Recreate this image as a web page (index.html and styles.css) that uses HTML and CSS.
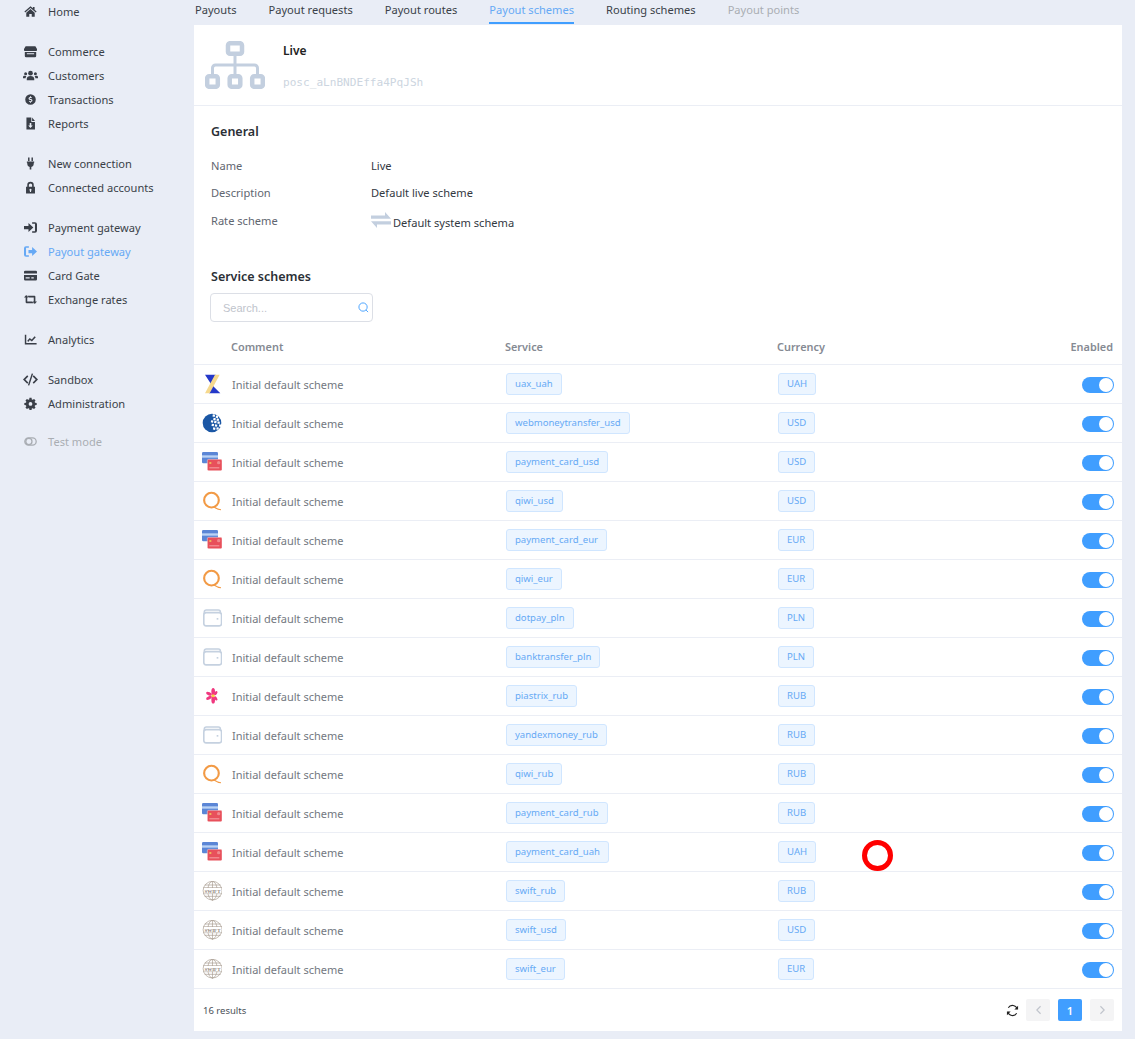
FILE: index.html
```html
<!DOCTYPE html>
<html lang="en">
<head>
    <meta name="viewport" content="width=device-width, initial-scale=1.0">
    <title>Payout schemes</title>
    <link rel="stylesheet" href="styles.css">
</head>
<body>
    <svg class="sprite" xmlns="http://www.w3.org/2000/svg">
        <symbol id="i-card" viewBox="0 0 30 30">
            <rect x="0" y="0" width="24" height="17" rx="2" fill="#5b86d6"/>
            <rect x="0" y="5" width="24" height="3.500" fill="#b9d3f5"/>
            <rect x="8" y="11" width="22" height="17" rx="2" fill="#e8505b" stroke="#fff" stroke-width=".6"/>
            <rect x="11" y="15" width="3" height="3" fill="#eeb45a"/>
            <rect x="11" y="23" width="15" height="1.500" fill="#f5a3a8"/>
            <circle cx="25" cy="16" r="2.500" fill="#f08a8f"/>
        </symbol>
        <symbol id="i-qiwi" viewBox="0 0 30 30">
            <circle cx="14.200" cy="13.700" r="11" fill="none" stroke="#f29a45" stroke-width="3.200"/>
            <path d="M18 24c3 2 6 4 10.500 4" fill="none" stroke="#f29a45" stroke-width="1.600"/>
        </symbol>
        <symbol id="i-wallet" viewBox="0 0 30 30">
            <path d="M3.500 9V6a3 3 0 0 1 3-3h18a3 3 0 0 1 3 3v3" fill="none" stroke="#c5d1e0" stroke-width="2.400"/>
            <rect x="2.700" y="7" width="26.600" height="19.800" rx="3.500" fill="#fff" stroke="#c5d1e0" stroke-width="2.400"/>
            <rect x="22" y="15" width="2.500" height="2.500" fill="#c5d1e0"/>
        </symbol>
        <symbol id="i-swift" viewBox="0 0 30 30">
            <g fill="none" stroke="#a79c90" stroke-width="1">
                <circle cx="15.700" cy="14.500" r="14"/>
                <ellipse cx="15.700" cy="14.500" rx="7" ry="14"/>
                <path d="M15.700 .5v29M4 6h24M2 10h28M2 19h28M4 23h24"/>
            </g>
            <rect x="3" y="10.500" width="26" height="8" fill="#fff"/>
            <text x="15.700" y="17.500" text-anchor="middle" class="swift-text">SWIFT</text>
        </symbol>
        <symbol id="i-uax" viewBox="0 0 30 30">
            <g transform="translate(1.500 0)">
                <path d="M3 1H19L12 15zM12 15 26 29H9z" fill="#2438c9"/>
                <path d="M18 1H25L10 29H3z" fill="#f6d98e"/>
            </g>
        </symbol>
        <symbol id="i-wm" viewBox="0 0 30 30">
            <circle cx="15" cy="15" r="14" fill="#1b57a5"/>
            <g fill="#fff" transform="rotate(10 15 15)">
                <rect x="14" y="2" width="3.400" height="3.400"/><rect x="19" y="3" width="3.400" height="3.400"/>
                <rect x="16" y="7" width="3.400" height="3.400"/><rect x="21" y="7" width="3.400" height="3.400"/>
                <rect x="13" y="11" width="3.400" height="3.400"/><rect x="18" y="11" width="3.400" height="3.400"/><rect x="23" y="11" width="3.400" height="3.400"/>
                <rect x="15" y="16" width="3.400" height="3.400"/><rect x="20" y="16" width="3.400" height="3.400"/><rect x="26" y="15" width="3.400" height="3.400"/>
                <rect x="18" y="21" width="3.400" height="3.400"/><rect x="23" y="20" width="3.400" height="3.400"/>
            </g>
        </symbol>
        <symbol id="i-flower" viewBox="0 0 30 30">
            <g transform="translate(3.500 3) scale(.78)">
                <g fill="#f0387f">
                    <ellipse cx="17" cy="7" rx="3.500" ry="7"/>
                    <ellipse cx="17" cy="23" rx="3.500" ry="7"/>
                    <ellipse cx="9" cy="11" rx="6" ry="3" transform="rotate(25 9 11)"/>
                    <ellipse cx="9" cy="19" rx="6" ry="3" transform="rotate(-25 9 19)"/>
                    <ellipse cx="22" cy="10" rx="2.500" ry="4.500" transform="rotate(35 22 10)"/>
                    <ellipse cx="22" cy="20" rx="2.500" ry="4.500" transform="rotate(-35 22 20)"/>
                </g>
                <circle cx="17" cy="15" r="3" fill="#f6d33c"/>
            </g>
        </symbol>
    </svg>

    <div class="layout">
        <nav class="sidebar">
            <ul class="nav-group">
                <li class="nav-item"><svg class="nav-icon" viewBox="0 0 16 16"><path d="M8 1.500 0.500 8l1 1.100L8 3.600l6.500 5.500 1-1.100L13 5.800V2.500h-2v1.600zM8 5 2.800 9.400V14.500h3.700V11h3v3.500h3.700V9.400z"/></svg>Home</li>
            </ul>
            <ul class="nav-group">
                <li class="nav-item"><svg class="nav-icon" viewBox="0 0 16 16"><path d="M2 1.500h12l2 3.500v1.500a1 1 0 0 1-1 1H1a1 1 0 0 1-1-1V5zM1 8.500h14v5a1.500 1.500 0 0 1-1.500 1.500h-11A1.500 1.500 0 0 1 1 13.500zM3.500 10v1.500h9V10z" fill-rule="evenodd"/></svg>Commerce</li>
                <li class="nav-item"><svg class="nav-icon nav-icon-wide" viewBox="0 0 16 16"><circle cx="8" cy="5.500" r="2.500"/><circle cx="2.800" cy="6" r="1.600"/><circle cx="13.200" cy="6" r="1.600"/><path d="M4 13v-1.500C4 9.800 5.500 8.500 8 8.500s4 1.300 4 3V13zM0 11V9.500C0 8.600.8 8.200 2 8.200c.6 0 1.200.2 1.600.5C3 9.400 2.800 10.200 2.800 11zM16 11V9.500c0-.9-.8-1.300-2-1.300-.6 0-1.200.2-1.600.5.600.7.800 1.500.800 2.300z"/></svg>Customers</li>
                <li class="nav-item"><svg class="nav-icon" viewBox="0 0 16 16"><path fill-rule="evenodd" d="M8 1.500a6.500 6.500 0 1 1 0 13 6.500 6.500 0 0 1 0-13zM7.400 4v1C6.300 5.200 5.600 6 5.600 6.900c0 2.200 3.400 1.500 3.400 2.500 0 .4-.4.600-1 .6-.5 0-1-.2-1.500-.5l-.6 1c.5.300 1 .5 1.500.6v1h1.200v-1c1.100-.2 1.800-1 1.800-1.900 0-2.300-3.400-1.600-3.400-2.500 0-.3.400-.6 1-.6.5 0 .9.100 1.300.4l.6-1c-.4-.3-.9-.4-1.300-.5V4z"/></svg>Transactions</li>
                <li class="nav-item"><svg class="nav-icon" viewBox="0 0 16 16"><path fill-rule="evenodd" d="M3 .5h6V6h4.500v9.500H3zM10 .5 13.500 5H10zM7 7.500v3H5.200L8 13.500l2.800-3H9v-3z"/></svg>Reports</li>
            </ul>
            <ul class="nav-group">
                <li class="nav-item"><svg class="nav-icon" viewBox="0 0 16 16"><path d="M5 .5h1.800V5H5zM9.200 .5H11V5H9.200zM3.500 5.500h9V7h-.5v1.500a4 4 0 0 1-3 3.800V15.500H7v-3.200a4 4 0 0 1-3-3.800V7h-.5z"/></svg>New connection</li>
                <li class="nav-item"><svg class="nav-icon" viewBox="0 0 16 16"><path fill-rule="evenodd" d="M4 7V5a4 4 0 0 1 8 0v2h1.500v8.500h-11V7zM6 7h4V5a2 2 0 0 0-4 0zM8 9.500a1.300 1.300 0 0 0-.7 2.400V13.500h1.400v-1.600A1.300 1.300 0 0 0 8 9.500z"/></svg>Connected accounts</li>
            </ul>
            <ul class="nav-group">
                <li class="nav-item"><svg class="nav-icon" viewBox="0 0 16 16"><path d="M0 6h5.500V2.500L11.500 8l-6 5.500V10H0zM10 1.500h3.500A2.500 2.500 0 0 1 16 4v8a2.500 2.500 0 0 1-2.500 2.500H10v-2h3.500V3.500H10z"/></svg>Payment gateway</li>
                <li class="nav-item nav-item-active"><svg class="nav-icon" viewBox="0 0 16 16"><path d="M5.500 6H10V2.500L16 8l-6 5.500V10H5.500zM6 1.500H2.500A2.500 2.500 0 0 0 0 4v8a2.500 2.500 0 0 0 2.500 2.500H6v-2H2.500v-9H6z"/></svg>Payout gateway</li>
                <li class="nav-item"><svg class="nav-icon" viewBox="0 0 16 16"><path fill-rule="evenodd" d="M1.500 2h13A1.500 1.500 0 0 1 16 3.500v2H0v-2A1.500 1.500 0 0 1 1.500 2zM0 7.500h16v5A1.500 1.500 0 0 1 14.500 14h-13A1.500 1.500 0 0 1 0 12.500zM2 10v1.800h5V10zM9 10v1.800h3V10z"/></svg>Card Gate</li>
                <li class="nav-item"><svg class="nav-icon" viewBox="0 0 16 16"><path d="M0 5.500 2.700 2.500 5.500 5.500H4V10.500H10l2 2H3a1 1 0 0 1-1-1v-6zM16 10.500 13.300 13.500 10.500 10.500H12V5.500H6l-2-2H13a1 1 0 0 1 1 1v6z"/></svg>Exchange rates</li>
            </ul>
            <ul class="nav-group">
                <li class="nav-item"><svg class="nav-icon" viewBox="0 0 16 16"><path d="M1 2h1.800v10.200H15.500V14H1zM4 9.500 7 6l2.500 2L13 4l1.500 1.200-4.800 5.300L7.200 8.500 5.200 11z"/></svg>Analytics</li>
            </ul>
            <ul class="nav-group">
                <li class="nav-item"><svg class="nav-icon nav-icon-wide" viewBox="0 0 16 16"><path d="M4.500 3.500 0 8l4.500 4.500 1.200-1.200L2.500 8l3.200-3.300zM11.500 3.500 16 8l-4.500 4.500-1.200-1.200L13.500 8l-3.200-3.300zM9.300 1.500l1.500.4-4.100 12.600-1.500-.4z"/></svg>Sandbox</li>
                <li class="nav-item"><svg class="nav-icon" viewBox="0 0 16 16"><path fill-rule="evenodd" d="M6.700 1h2.600l.3 2 1.100.5 1.700-1.100 1.800 1.800-1.100 1.700.5 1.100 2 .3v2.600l-2 .3-.5 1.100 1.100 1.700-1.800 1.800-1.700-1.100-1.100.5-.3 2H6.700l-.3-2-1.100-.5-1.700 1.100-1.800-1.800 1.100-1.700-.5-1.100-2-.3V7.300l2-.3.5-1.100-1.100-1.700 1.800-1.800 1.700 1.100 1.100-.5zM8 6.200a2.300 2.300 0 1 0 0 4.600 2.300 2.300 0 0 0 0-4.600z"/></svg>Administration</li>
            </ul>
            <ul class="nav-group nav-group-last">
                <li class="nav-item nav-item-muted"><svg class="nav-icon" viewBox="0 0 16 16"><rect x="1" y="3.500" width="14" height="9" rx="4.500" fill="none" stroke="currentColor" stroke-width="1.600"/><circle cx="6" cy="8" r="3.800" fill="none" stroke="currentColor" stroke-width="1.600"/></svg>Test mode</li>
            </ul>
        </nav>

        <main class="content">
            <div class="tabs">
                <span class="tab">Payouts</span>
                <span class="tab">Payout requests</span>
                <span class="tab">Payout routes</span>
                <span class="tab tab-active">Payout schemes</span>
                <span class="tab">Routing schemes</span>
                <span class="tab tab-disabled">Payout points</span>
            </div>

            <div class="card">
                <header class="card-head">
                    <svg class="head-icon" viewBox="0 0 60 48">
                        <g fill="none" stroke="#c3cfdf" stroke-width="4.500">
                            <rect x="23" y="2.200" width="14" height="10.600" rx="2"/>
                            <rect x="2.200" y="35.200" width="10.600" height="10.600" rx="2"/>
                            <rect x="24.700" y="35.200" width="10.600" height="10.600" rx="2"/>
                            <rect x="47.200" y="35.200" width="10.600" height="10.600" rx="2"/>
                        </g>
                        <path d="M30 15v18M7.500 33v-6a3 3 0 0 1 3-3h39a3 3 0 0 1 3 3v6" fill="none" stroke="#c3cfdf" stroke-width="3"/>
                    </svg>
                    <div class="head-text">
                        <div class="head-title">Live</div>
                        <div class="head-id">posc_aLnBNDEffa4PqJSh</div>
                    </div>
                </header>

                <section class="general">
                    <h3 class="section-title">General</h3>
                    <div class="field"><span class="field-label">Name</span><span class="field-value">Live</span></div>
                    <div class="field"><span class="field-label">Description</span><span class="field-value">Default live scheme</span></div>
                    <div class="field field-rate"><span class="field-label">Rate scheme</span><span class="field-value"><svg class="rate-icon" viewBox="0 0 20 16"><path d="M0 3.500h14V0L20 6.800H0zM20 9.200H0L6 16v-3.500h14z" fill="#c3cfdf"/></svg>Default system schema</span></div>
                </section>

                <section class="schemes">
                    <h3 class="section-title">Service schemes</h3>
                    <div class="search">
                        <span class="search-text">Search...</span>
                        <svg class="search-icon" viewBox="0 0 12 12"><circle cx="5.500" cy="5.500" r="4.500" fill="none" stroke="#409eff"/><path d="M8.800 8.800 11 11" stroke="#409eff"/></svg>
                    </div>
                </section>

                <div class="table-head">
                    <span class="col-comment">Comment</span>
                    <span class="col-service">Service</span>
                    <span class="col-currency">Currency</span>
                    <span class="col-enabled">Enabled</span>
                </div>

                <div class="row"><svg class="row-icon"><use href="#i-uax"/></svg><span class="col-comment">Initial default scheme</span><span class="col-service"><span class="tag">uax_uah</span></span><span class="col-currency"><span class="tag">UAH</span></span><span class="col-enabled"><span class="switch"></span></span></div>
                <div class="row"><svg class="row-icon"><use href="#i-wm"/></svg><span class="col-comment">Initial default scheme</span><span class="col-service"><span class="tag">webmoneytransfer_usd</span></span><span class="col-currency"><span class="tag">USD</span></span><span class="col-enabled"><span class="switch"></span></span></div>
                <div class="row"><svg class="row-icon"><use href="#i-card"/></svg><span class="col-comment">Initial default scheme</span><span class="col-service"><span class="tag">payment_card_usd</span></span><span class="col-currency"><span class="tag">USD</span></span><span class="col-enabled"><span class="switch"></span></span></div>
                <div class="row"><svg class="row-icon"><use href="#i-qiwi"/></svg><span class="col-comment">Initial default scheme</span><span class="col-service"><span class="tag">qiwi_usd</span></span><span class="col-currency"><span class="tag">USD</span></span><span class="col-enabled"><span class="switch"></span></span></div>
                <div class="row"><svg class="row-icon"><use href="#i-card"/></svg><span class="col-comment">Initial default scheme</span><span class="col-service"><span class="tag">payment_card_eur</span></span><span class="col-currency"><span class="tag">EUR</span></span><span class="col-enabled"><span class="switch"></span></span></div>
                <div class="row"><svg class="row-icon"><use href="#i-qiwi"/></svg><span class="col-comment">Initial default scheme</span><span class="col-service"><span class="tag">qiwi_eur</span></span><span class="col-currency"><span class="tag">EUR</span></span><span class="col-enabled"><span class="switch"></span></span></div>
                <div class="row"><svg class="row-icon"><use href="#i-wallet"/></svg><span class="col-comment">Initial default scheme</span><span class="col-service"><span class="tag">dotpay_pln</span></span><span class="col-currency"><span class="tag">PLN</span></span><span class="col-enabled"><span class="switch"></span></span></div>
                <div class="row"><svg class="row-icon"><use href="#i-wallet"/></svg><span class="col-comment">Initial default scheme</span><span class="col-service"><span class="tag">banktransfer_pln</span></span><span class="col-currency"><span class="tag">PLN</span></span><span class="col-enabled"><span class="switch"></span></span></div>
                <div class="row"><svg class="row-icon"><use href="#i-flower"/></svg><span class="col-comment">Initial default scheme</span><span class="col-service"><span class="tag">piastrix_rub</span></span><span class="col-currency"><span class="tag">RUB</span></span><span class="col-enabled"><span class="switch"></span></span></div>
                <div class="row"><svg class="row-icon"><use href="#i-wallet"/></svg><span class="col-comment">Initial default scheme</span><span class="col-service"><span class="tag">yandexmoney_rub</span></span><span class="col-currency"><span class="tag">RUB</span></span><span class="col-enabled"><span class="switch"></span></span></div>
                <div class="row"><svg class="row-icon"><use href="#i-qiwi"/></svg><span class="col-comment">Initial default scheme</span><span class="col-service"><span class="tag">qiwi_rub</span></span><span class="col-currency"><span class="tag">RUB</span></span><span class="col-enabled"><span class="switch"></span></span></div>
                <div class="row"><svg class="row-icon"><use href="#i-card"/></svg><span class="col-comment">Initial default scheme</span><span class="col-service"><span class="tag">payment_card_rub</span></span><span class="col-currency"><span class="tag">RUB</span></span><span class="col-enabled"><span class="switch"></span></span></div>
                <div class="row"><svg class="row-icon"><use href="#i-card"/></svg><span class="col-comment">Initial default scheme</span><span class="col-service"><span class="tag">payment_card_uah</span></span><span class="col-currency"><span class="tag">UAH</span></span><span class="col-enabled"><span class="switch"></span></span></div>
                <div class="row"><svg class="row-icon"><use href="#i-swift"/></svg><span class="col-comment">Initial default scheme</span><span class="col-service"><span class="tag">swift_rub</span></span><span class="col-currency"><span class="tag">RUB</span></span><span class="col-enabled"><span class="switch"></span></span></div>
                <div class="row"><svg class="row-icon"><use href="#i-swift"/></svg><span class="col-comment">Initial default scheme</span><span class="col-service"><span class="tag">swift_usd</span></span><span class="col-currency"><span class="tag">USD</span></span><span class="col-enabled"><span class="switch"></span></span></div>
                <div class="row"><svg class="row-icon"><use href="#i-swift"/></svg><span class="col-comment">Initial default scheme</span><span class="col-service"><span class="tag">swift_eur</span></span><span class="col-currency"><span class="tag">EUR</span></span><span class="col-enabled"><span class="switch"></span></span></div>

                <footer class="card-foot">
                    <span class="results">16 results</span>
                    <div class="pager">
                        <svg class="refresh" viewBox="0 0 14 14"><path d="M12 5.500A5.200 5.200 0 0 0 2.500 4M2 8.500a5.200 5.200 0 0 0 9.500 1.500" fill="none" stroke="#222" stroke-width="1.200"/><path d="M13 2V6H9zM1 12V8H5z" fill="#222"/></svg>
                        <span class="page-btn"><svg class="chevron" viewBox="0 0 8 12"><path d="M6.500 1.500 2 6l4.500 4.500" fill="none" stroke="#c0c4cc" stroke-width="1.400"/></svg></span>
                        <span class="page-btn page-btn-active">1</span>
                        <span class="page-btn"><svg class="chevron" viewBox="0 0 8 12"><path d="M1.500 1.500 6 6l-4.500 4.500" fill="none" stroke="#c0c4cc" stroke-width="1.400"/></svg></span>
                    </div>
                </footer>
            </div>
        </main>
    </div>

    <div class="click-marker"></div>
</body>
</html>
```

FILE: styles.css
```css
html, body {
    margin: 0;
    height: 1039px;
    overflow: hidden;
}
body {
    position: relative;
    font-family: "Noto Sans", "Open Sans", sans-serif;
    font-size: 11px;
    background: #e9edf6;
    color: #333;
}
.sprite {
    display: none;
}
.layout {
    display: flex;
}

/* sidebar */
.sidebar {
    width: 194px;
    flex: none;
    margin-top: -1px;
}
.nav-group {
    list-style: none;
    margin: 0 0 16px;
    padding: 0;
}
.nav-group-last {
    margin-top: -2px;
}
.nav-item {
    display: flex;
    align-items: center;
    height: 24px;
    padding-left: 24px;
    font-size: 11.100px;
    color: #3a3f48;
}
.nav-item-active {
    color: #66a9f5;
}
.nav-item-muted {
    color: #a9adb3;
}
.nav-icon {
    width: 13px;
    height: 13px;
    margin-right: 11px;
    fill: currentColor;
    flex: none;
}
.nav-icon-wide {
    width: 15px;
    height: 15px;
    margin: 0 10px 0 -1px;
}

/* tabs */
.content {
    width: 928px;
    flex: none;
}
.tabs {
    display: flex;
    gap: 32px;
    height: 25px;
    padding-left: 1px;
}
.tab {
    height: 23px;
    line-height: 20px;
    font-size: 11.100px;
    color: #3a3f48;
}
.tab-active {
    color: #66a9f5;
    border-bottom: 2px solid #409eff;
    height: 22px;
}
.tab-disabled {
    color: #a9adb3;
}

/* card */
.card {
    background: #fff;
    height: 1006px;
}
.card-head {
    display: flex;
    height: 80px;
    border-bottom: 1px solid #ebeef5;
}
.head-icon {
    width: 60px;
    height: 48px;
    margin: 16px 0 0 11px;
}
.head-text {
    margin-left: 18px;
}
.head-title {
    margin-top: 17px;
    font-size: 12px;
    font-weight: 600;
    color: #222;
}
.head-id {
    margin-top: 17px;
    font-family: "DejaVu Sans Mono", monospace;
    font-size: 11.100px;
    color: #ccd5e0;
}
.general {
    padding: 17px 17px 0;
    height: 145px;
    box-sizing: border-box;
}
.section-title {
    margin: 0;
    font-size: 12.500px;
    line-height: 18px;
    font-weight: 600;
    color: #2b2f36;
}
.general .section-title {
    margin-bottom: 11px;
}
.field {
    display: flex;
    align-items: center;
    height: 27px;
    font-size: 11.100px;
}
.field-label {
    width: 160px;
    color: #5f6670;
}
.field-value {
    color: #33383f;
}
.field-rate .field-label {
    margin-top: 2px;
}
.field-rate .field-value {
    margin-top: 2px;
}
.rate-icon {
    width: 20px;
    height: 16px;
    margin-right: 2px;
    vertical-align: -1px;
}
.schemes {
    padding: 17px 17px 0;
    height: 80px;
    box-sizing: border-box;
}
.schemes .section-title {
    margin: 0 0 7px;
}
.search {
    display: flex;
    align-items: center;
    justify-content: space-between;
    box-sizing: border-box;
    width: 163px;
    height: 29px;
    margin-left: -1px;
    padding: 0 3px 0 12px;
    border: 1px solid #dcdfe6;
    border-radius: 4px;
}
.search-text {
    font-family: "Liberation Sans", sans-serif;
    font-size: 11px;
    color: #c0c4cc;
}
.search-icon {
    width: 11px;
    height: 11px;
}

/* table */
.table-head, .row {
    display: flex;
    align-items: center;
    border-bottom: 1px solid #ebeef5;
    box-sizing: border-box;
}
.table-head {
    height: 36px;
    margin-top: -2px;
    font-weight: 600;
    color: #858a93;
}
.row {
    height: 39px;
    color: #73787f;
}
.row-icon {
    width: 20px;
    height: 20px;
    margin: -1px 0 0 8px;
    flex: none;
}
.col-comment {
    width: 274px;
    flex: none;
    font-size: 11px;
}
.table-head span {
    font-size: 10.900px;
}
.table-head .col-comment {
    margin-left: 37px;
}
.row .col-comment {
    margin-left: 10px;
}
.col-service {
    width: 272px;
    flex: none;
}
.col-currency {
    width: 100px;
    flex: none;
}
.col-enabled {
    flex: 1;
    display: flex;
    justify-content: flex-end;
    padding-right: 8px;
}
.table-head .col-enabled {
    padding-right: 9px;
}
.swift-text {
    font-family: "Liberation Serif", serif;
    font-size: 7.500px;
    font-weight: 700;
    fill: #8f857a;
}
.tag {
    display: inline-block;
    box-sizing: border-box;
    height: 22px;
    line-height: 20px;
    padding: 0 8px;
    font-size: 9.550px;
    color: #66a9f5;
    background: #ecf5ff;
    border: 1px solid #d0e6ff;
    border-radius: 3px;
    vertical-align: top;
}
.switch {
    position: relative;
    display: block;
    width: 32px;
    height: 16px;
    margin-top: 2px;
    border-radius: 8px;
    background: #409eff;
}
.switch::after {
    content: "";
    position: absolute;
    top: 1px;
    right: 1px;
    width: 14px;
    height: 14px;
    border-radius: 50%;
    background: #fff;
}

/* footer */
.card-foot {
    display: flex;
    align-items: center;
    justify-content: space-between;
    height: 42px;
    padding: 0 8px 0 9px;
}
.results {
    font-size: 9.500px;
    color: #4a4f57;
}
.pager {
    display: flex;
    align-items: center;
    gap: 8px;
}
.refresh {
    width: 13px;
    height: 13px;
    margin-right: -1px;
}
.page-btn {
    display: flex;
    align-items: center;
    justify-content: center;
    width: 24px;
    height: 22px;
    background: #f4f4f5;
    border-radius: 2px;
}
.page-btn-active {
    font-size: 11px;
    font-weight: 600;
    color: #fff;
    background: #409eff;
}
.chevron {
    width: 7px;
    height: 10px;
}

/* red click marker drawn over the page */
.click-marker {
    position: absolute;
    left: 862px;
    top: 840px;
    width: 21px;
    height: 21px;
    border: 5px solid #f00;
    border-radius: 50%;
}
```
